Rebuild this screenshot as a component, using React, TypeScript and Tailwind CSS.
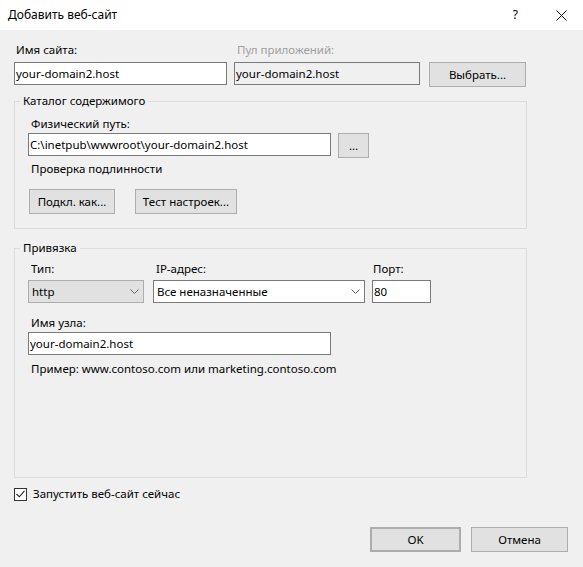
import type { ReactNode } from 'react';

function Label(props: { children: ReactNode; className?: string }) {
  return <div className={'h-[16px] leading-[16px] whitespace-nowrap ' + (props.className ?? '')}>{props.children}</div>;
}

function TextBox(props: { value: string; className?: string }) {
  return (
    <div
      className={
        'h-[23px] border border-[#7a7a7a] pl-[1px] leading-[21px] whitespace-nowrap overflow-hidden ' +
        (props.className ?? 'bg-white')
      }
    >
      {props.value}
    </div>
  );
}

function Button(props: { children: ReactNode; className?: string }) {
  return (
    <div
      className={
        'flex items-center justify-center border border-[#adadad] bg-[#e1e1e1] whitespace-nowrap ' +
        (props.className ?? '')
      }
    >
      {props.children}
    </div>
  );
}

function Chevron() {
  return (
    <svg width="9" height="5" viewBox="0 0 9 5" className="shrink-0">
      <path d="M0.5 0.5 L4.5 4.5 L8.5 0.5" fill="none" stroke="#606060" strokeWidth="1" />
    </svg>
  );
}

function Select(props: { value: string; className: string }) {
  return (
    <div className={'flex h-[23px] items-center border pl-[3px] pr-[4px] ' + props.className}>
      <span className="flex-1 whitespace-nowrap leading-[21px]">{props.value}</span>
      <Chevron />
    </div>
  );
}

function Group(props: { title: string; children: ReactNode; className?: string }) {
  return (
    <fieldset className={'w-[513px] border border-[#dcdcdc] ' + (props.className ?? '')}>
      <legend className="ml-[5px] px-[3px] leading-[16px]">{props.title}</legend>
      <div className="pl-[13px]">{props.children}</div>
    </fieldset>
  );
}

export default function App() {
  return (
    <div className="w-[583px] h-[567px] overflow-hidden bg-[#f0f0f0] text-[11.5px] text-black font-['Noto_Sans',sans-serif]">
      {/* title bar */}
      <div className="flex h-[30px] items-center bg-white pl-[8px]">
        <span className="text-[12px] leading-[16px]">Добавить веб-сайт</span>
        <span className="ml-auto text-[12px] leading-[16px]">?</span>
        <svg width="11" height="11" viewBox="0 0 11 11" className="ml-[38px] mr-[16px]">
          <path d="M0.5 0.5 L10.5 10.5 M10.5 0.5 L0.5 10.5" stroke="#111" strokeWidth="1" />
        </svg>
      </div>

      <div className="px-[14px]">
        {/* site name / pool */}
        <div className="flex pt-[12px]">
          <div className="w-[213px]">
            <Label className="pl-[2px]">Имя сайта:</Label>
            <TextBox value="your-domain2.host" className="mt-[4px] bg-white" />
          </div>
          <div className="ml-[7px] w-[186px]">
            <Label className="pl-[3px] text-[#a0a0a0]">Пул приложений:</Label>
            <TextBox value="your-domain2.host" className="mt-[4px] bg-[#f0f0f0]" />
          </div>
          <Button className="ml-[9px] mt-[20px] h-[25px] w-[97px]">Выбрать...</Button>
        </div>

        <Group title="Каталог содержимого" className="mt-[6px]">
          <Label className="mt-[7px] pl-[3px]">Физический путь:</Label>
          <div className="mt-[1px] flex items-start">
            <TextBox value="C:\inetpub\wwwroot\your-domain2.host" className="w-[303px] bg-white" />
            <Button className="ml-[7px] h-[25px] w-[31px]">...</Button>
          </div>
          <Label className="mt-[3px] pl-[3px]">Проверка подлинности</Label>
          <div className="mt-[12px] flex pb-[14px]">
            <Button className="ml-[1px] h-[25px] w-[86px]">Подкл. как...</Button>
            <Button className="ml-[20px] h-[25px] w-[102px]">Тест настроек...</Button>
          </div>
        </Group>

        <Group title="Привязка" className="mt-[11px]">
          <div className="mt-[5px] flex">
            <div className="w-[116px]">
              <Label className="pl-[3px]">Тип:</Label>
              <Select value="http" className="mt-[3px] border-[#adadad] bg-[#e1e1e1]" />
            </div>
            <div className="ml-[9px] w-[212px]">
              <Label className="pl-[3px]">IP-адрес:</Label>
              <Select value="Все неназначенные" className="mt-[3px] border-[#7a7a7a] bg-white" />
            </div>
            <div className="ml-[7px] w-[59px]">
              <Label className="pl-[1px]">Порт:</Label>
              <TextBox value="80" className="mt-[3px] bg-white" />
            </div>
          </div>
          <Label className="mt-[12px] pl-[3px]">Имя узла:</Label>
          <TextBox value="your-domain2.host" className="mt-[1px] w-[303px] bg-white" />
          <Label className="mt-[6px] pl-[3px]">Пример: www.contoso.com или marketing.contoso.com</Label>
          <div className="h-[100px]" />
        </Group>

        {/* start checkbox */}
        <div className="mt-[8px] flex h-[16px] items-center">
          <div className="flex h-[13px] w-[13px] items-center justify-center border border-[#333] bg-white">
            <svg width="9" height="8" viewBox="0 0 9 8">
              <path d="M0.5 4 L3.3 6.8 L8.5 0.8" fill="none" stroke="#222" strokeWidth="1.1" />
            </svg>
          </div>
          <span className="ml-[6px] leading-[16px]">Запустить веб-сайт сейчас</span>
        </div>

        {/* dialog buttons */}
        <div className="mt-[25px] flex justify-end pr-[1px]">
          <Button className="h-[25px] w-[91px] border-2 border-[#0078d7]">OK</Button>
          <Button className="ml-[10px] h-[25px] w-[97px]">Отмена</Button>
        </div>
      </div>
    </div>
  );
}
